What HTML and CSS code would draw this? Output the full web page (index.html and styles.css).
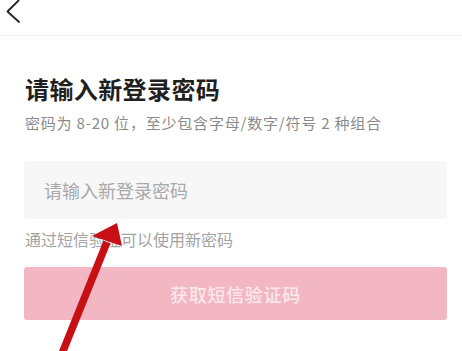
FILE: index.html
```html
<!DOCTYPE html>
<html lang="zh-CN">
<head>
<meta charset="utf-8">
<link rel="stylesheet" href="styles.css">
</head>
<body>
<div class="page">
  <header class="topbar">
    <svg class="back" width="24" height="24" viewBox="0 0 24 24">
      <polyline points="18.5,0.5 7.5,11.5 19,22" fill="none" stroke="#222" stroke-width="1.8" stroke-linecap="round" stroke-linejoin="round"/>
    </svg>
  </header>
  <main class="content">
    <h1 class="title">请输入新登录密码</h1>
    <p class="subtitle">密码为 8-20 位，至少包含字母/数字/符号 2 种组合</p>
    <div class="field">请输入新登录密码</div>
    <p class="hint">通过短信验证可以使用新密码</p>
    <div class="btn">获取短信验证码</div>
  </main>
  <svg class="arrow" width="462" height="351" viewBox="0 0 462 351">
    <line x1="61" y1="356" x2="107" y2="242" stroke="#c70f14" stroke-width="7.5"/>
    <polygon points="117,223 92,236 122,246" fill="#c70f14"/>
  </svg>
</div>
</body>
</html>
```

FILE: styles.css
```css
* { box-sizing: border-box; }
html, body { margin: 0; padding: 0; background: #fff; }
body {
  font-family: "Noto Sans CJK SC", "Noto Sans", sans-serif;
  width: 462px;
  height: 351px;
  overflow: hidden;
}
.page { position: relative; width: 462px; height: 351px; }
.topbar {
  height: 36px;
  border-bottom: 1px solid #f0f0f0;
}
.back { display: block; }
.content { padding: 0 15px 0 24px; }
.title {
  margin: 37px 0 0 1px;
  font-size: 24px;
  line-height: 32px;
  font-weight: 700;
  letter-spacing: 0.4px;
  color: #1f1f1f;
}
.subtitle {
  margin: 8px 0 0 1px;
  font-size: 15px;
  line-height: 20px;
  letter-spacing: 0.8px;
  color: #8a8a8a;
}
.field {
  margin-top: 28px;
  height: 58px;
  background: #f7f7f7;
  border-radius: 3px;
  padding-left: 20px;
  display: flex;
  align-items: center;
  font-size: 18px;
  color: #a9a9a9;
}
.hint {
  margin: 10px 0 0 1px;
  font-size: 16px;
  line-height: 20px;
  color: #a3a3a3;
}
.btn {
  margin-top: 18px;
  height: 53px;
  background: #f2b7c3;
  border-radius: 3px;
  display: flex;
  align-items: center;
  justify-content: center;
  font-size: 18px;
  font-weight: 500;
  letter-spacing: 0.7px;
  color: #fbe9ed;
}
.arrow { position: absolute; left: 0; top: 0; pointer-events: none; }
```
